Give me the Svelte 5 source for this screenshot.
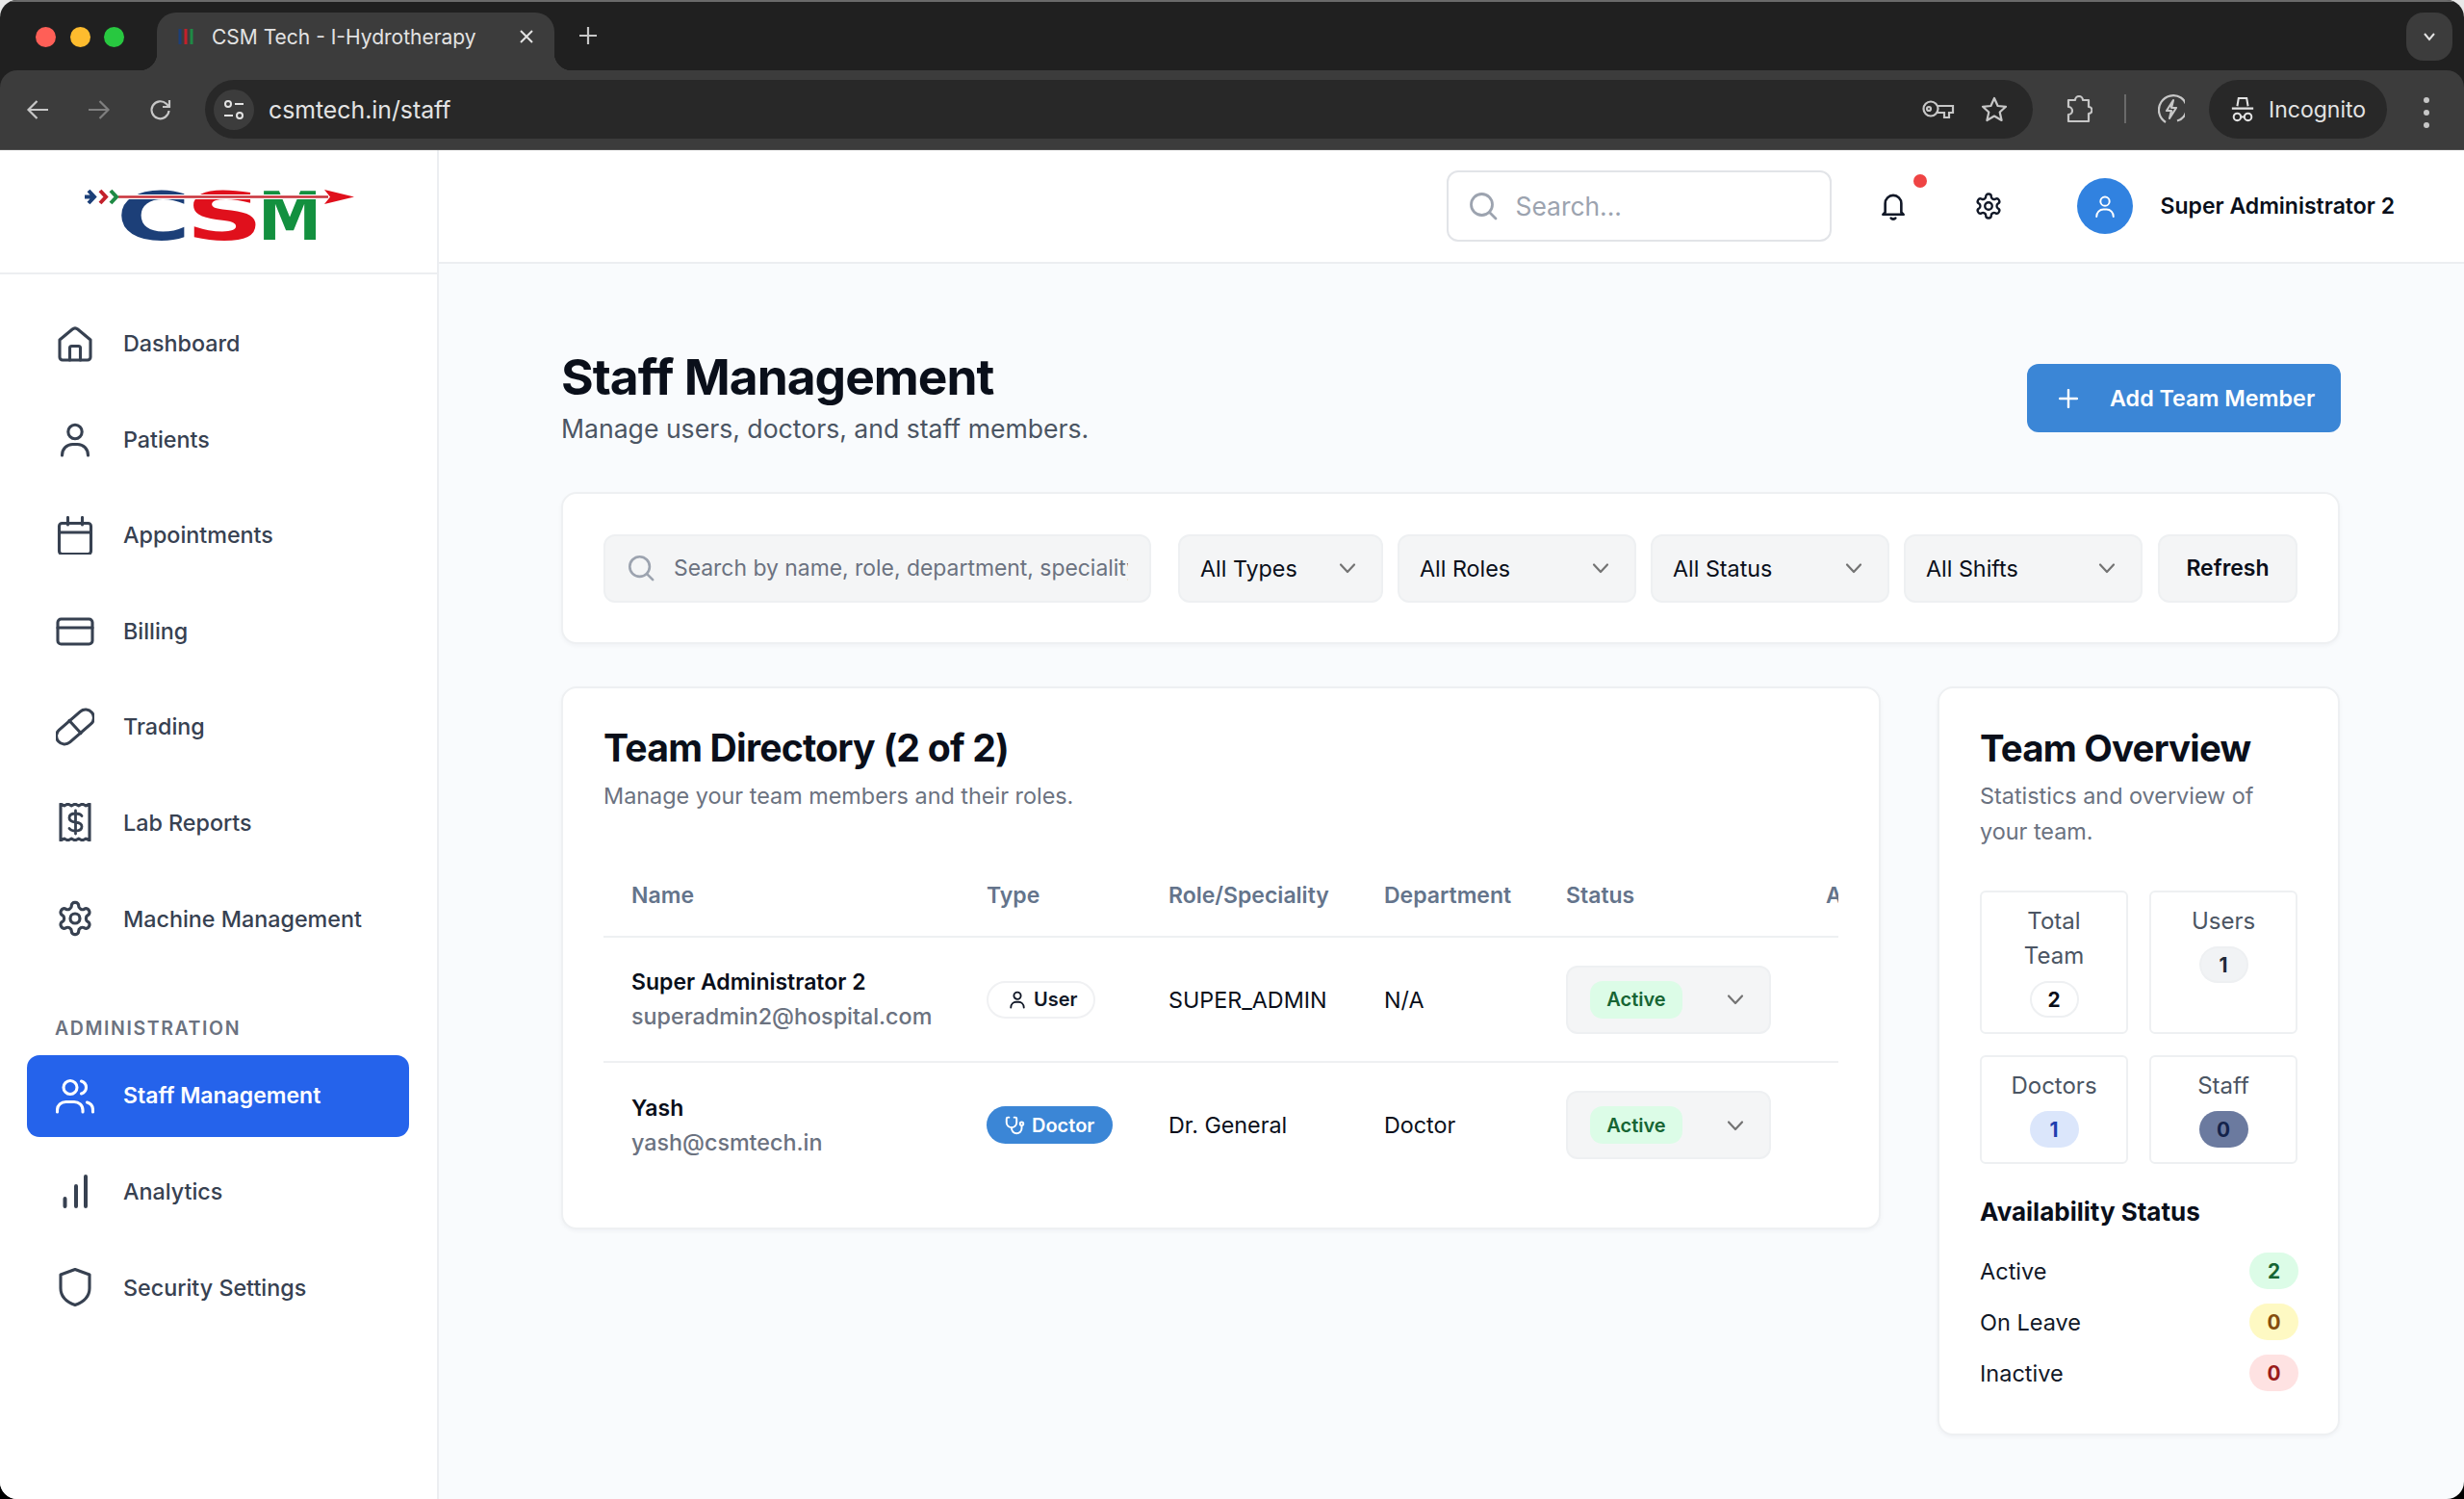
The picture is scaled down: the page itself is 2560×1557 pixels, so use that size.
<script lang="ts">
  const ICONS: Record<string, string> = {
    home: '<path d="M4 16 17.2 5a4.4 4.4 0 0 1 5.6 0L36 16v18a3 3 0 0 1-3 3H7a3 3 0 0 1-3-3Z"/><path d="M14.5 37V24.5a2 2 0 0 1 2-2h7a2 2 0 0 1 2 2V37"/>',
    user: '<circle cx="20" cy="12.5" r="7.2"/><path d="M6.5 37c0-7 5-11.5 11-11.5h5c6 0 11 4.500 11 11.500"/>',
    calendar: '<rect x="3.500" y="7.500" width="33" height="32" rx="3"/><path d="M3.500 17h33M12.500 1.500V9M27.500 1.500V9"/>',
    card: '<rect x="2" y="8" width="36" height="26" rx="3.500"/><path d="M2 17h36"/>',
    pill: '<rect x="-3" y="11.500" width="46" height="17" rx="8.500" transform="rotate(-41 20 20)"/><path d="m14 13.500 12 13"/>',
    receipt: '<path d="M5 1v38l3.750-2 3.750 2 3.750-2 3.750 2 3.750-2 3.750 2 3.750-2L35 39V1l-3.750 2-3.750-2-3.750 2L20 1l-3.750 2-3.750-2-3.750 2Z"/><path d="M27 13.500c-1-1.500-3-2.500-6.500-2.500-4 0-6.500 1.800-6.500 4.500s2.500 4 6.500 4.500 6.500 1.800 6.500 4.500-2.500 4.500-6.500 4.500c-3.500 0-5.500-1-6.500-2.500M20.500 8v24" stroke-width="2.800"/>',
    users: '<circle cx="15" cy="11.500" r="7"/><path d="M26.500 5c3 1 5 3.500 5 6.500s-2 5.500-5 6.500M1.500 37v-2c0-5 4-8.500 9-8.500h8.500c5 0 9 3.500 9 8.500v2M32.500 27c3.500 1 6 4 6 8v2"/>',
    bars: '<path d="M9.500 35v-8M21 35V14M31 35V4" stroke-width="4"/>',
    shield: '<path d="M20 1.500 35 7v14c0 9-6.500 14.500-15 17.500C11.500 35.500 5 30 5 21V7Z"/>',
  };
  const GEAR = '<g transform="scale(1.667)"><path stroke-width="1.900" d="M12.220 2h-.44a2 2 0 0 0-2 2v.18a2 2 0 0 1-1 1.730l-.43.25a2 2 0 0 1-2 0l-.15-.08a2 2 0 0 0-2.730.73l-.22.38a2 2 0 0 0 .73 2.730l.15.1a2 2 0 0 1 1 1.720v.51a2 2 0 0 1-1 1.740l-.15.09a2 2 0 0 0-.73 2.730l.22.38a2 2 0 0 0 2.730.73l.15-.08a2 2 0 0 1 2 0l.43.25a2 2 0 0 1 1 1.730V20a2 2 0 0 0 2 2h.44a2 2 0 0 0 2-2v-.18a2 2 0 0 1 1-1.730l.43-.25a2 2 0 0 1 2 0l.15.08a2 2 0 0 0 2.730-.73l.22-.39a2 2 0 0 0-.73-2.730l-.15-.08a2 2 0 0 1-1-1.740v-.5a2 2 0 0 1 1-1.740l.15-.09a2 2 0 0 0 .73-2.730l-.22-.38a2 2 0 0 0-2.730-.73l-.15.08a2 2 0 0 1-2 0l-.43-.25a2 2 0 0 1-1-1.730V4a2 2 0 0 0-2-2z"/><circle stroke-width="1.900" cx="12" cy="12" r="3"/></g>';

  const MAIN_NAV = [
    { label: 'Dashboard', icon: ICONS.home },
    { label: 'Patients', icon: ICONS.user },
    { label: 'Appointments', icon: ICONS.calendar },
    { label: 'Billing', icon: ICONS.card },
    { label: 'Trading', icon: ICONS.pill },
    { label: 'Lab Reports', icon: ICONS.receipt },
    { label: 'Machine Management', icon: GEAR },
  ];
  const ADMIN_NAV = [
    { label: 'Staff Management', icon: ICONS.users, active: true },
    { label: 'Analytics', icon: ICONS.bars },
    { label: 'Security Settings', icon: ICONS.shield },
  ];
  const FILTERS = [
    { label: 'All Types', width: 213 },
    { label: 'All Roles', width: 248 },
    { label: 'All Status', width: 248 },
    { label: 'All Shifts', width: 248 },
  ];
  const MEMBERS = [
    { name: 'Super Administrator 2', email: 'superadmin2@hospital.com', type: 'User', role: 'SUPER_ADMIN', dept: 'N/A' },
    { name: 'Yash', email: 'yash@csmtech.in', type: 'Doctor', role: 'Dr. General', dept: 'Doctor' },
  ];
  const STATS = [
    { label: 'Total Team', value: 2, tone: 'plain' },
    { label: 'Users', value: 1, tone: 'soft' },
    { label: 'Doctors', value: 1, tone: 'blue' },
    { label: 'Staff', value: 0, tone: 'slate' },
  ];
  const AVAILABILITY = [
    { label: 'Active', value: 2, tone: 'green' },
    { label: 'On Leave', value: 0, tone: 'yellow' },
    { label: 'Inactive', value: 0, tone: 'red' },
  ];
</script>

{#snippet chevron()}
  <svg class="chevron" viewBox="0 0 20 20" width="20" height="20" fill="none" stroke="currentColor" stroke-width="2.200" stroke-linecap="round" stroke-linejoin="round"><path d="m3 6.500 7 7.500 7-7.500" /></svg>
{/snippet}

{#snippet searchIcon()}
  <svg viewBox="0 0 32 32" width="32" height="32" fill="none" stroke="currentColor" stroke-width="2.800" stroke-linecap="round"><circle cx="14.500" cy="14.500" r="11" /><path d="m22.500 22.500 6.500 6.500" /></svg>
{/snippet}

<div class="window">
  <div class="browser">
    <div class="tabstrip">
      <div class="lights">
        <span class="light red"></span>
        <span class="light yellow"></span>
        <span class="light green"></span>
      </div>
      <div class="tab">
        <svg class="favicon" viewBox="0 0 20 20" width="20" height="20" fill="none" stroke-width="3"><path stroke="#1c3f78" d="M4 2v16" /><path stroke="#c3202b" d="M10 2v16" /><path stroke="#1f8a45" d="M16 2v16" /></svg>
        <span class="tab-title">CSM Tech - I-Hydrotherapy</span>
        <svg class="tab-close" viewBox="0 0 16 16" width="16" height="16" fill="none" stroke="#e3e3e3" stroke-width="2"><path d="m2 2 12 12M14 2 2 14" /></svg>
      </div>
      <svg class="new-tab" viewBox="0 0 20 20" width="20" height="20" fill="none" stroke="#c7c7c7" stroke-width="2.200"><path d="M10 1v18M1 10h18" /></svg>
      <span class="tab-search">
        <svg viewBox="0 0 14 14" width="14" height="14" fill="none" stroke="#e3e3e3" stroke-width="2"><path d="m2 4 5 6 5-6" /></svg>
      </span>
    </div>
    <div class="toolbar">
      <span class="tool">
        <svg viewBox="0 0 24 24" width="24" height="24" fill="none" stroke="#c7c7c7" stroke-width="2.200"><path d="M23 12H3M11.500 3 2.500 12l9 9" /></svg>
      </span>
      <span class="tool">
        <svg viewBox="0 0 24 24" width="24" height="24" fill="none" stroke="#7f7f7f" stroke-width="2.200"><path d="M1 12h20M12.500 3l9 9-9 9" /></svg>
      </span>
      <span class="tool">
        <svg viewBox="0 0 24 24" width="24" height="24" fill="none" stroke="#c7c7c7" stroke-width="2.200"><path d="M20.500 13a9 9 0 1 1-2.700-7.200L21 9M21 2v7h-7" /></svg>
      </span>
      <div class="omnibox">
        <span class="site-info">
          <svg viewBox="0 0 24 24" width="24" height="24" fill="none" stroke="#e3e3e3" stroke-width="2"><circle cx="6" cy="6" r="3" /><path d="M13 6h9M2 18h9" /><circle cx="18" cy="18" r="3" /></svg>
        </span>
        <span class="url">csmtech.in/staff</span>
        <span class="omni-actions">
          <svg viewBox="0 0 34 24" width="34" height="24" fill="none" stroke="#c7c7c7" stroke-width="2.200"><circle cx="9" cy="11" r="7.500" /><circle cx="7" cy="11" r="2" /><path d="M16 8h16v7h-4v5h-5v-5h-7" /></svg>
          <svg viewBox="0 0 28 28" width="28" height="28" fill="none" stroke="#c7c7c7" stroke-width="2.200" stroke-linejoin="round"><path d="m14 2 3.600 8 8.400.8-6.300 5.700 1.900 8.500-7.600-4.500L6.400 25l1.900-8.500L2 10.800l8.400-.8Z" /></svg>
        </span>
      </div>
      <svg class="ext" viewBox="0 0 28 32" width="28" height="32" fill="none" stroke="#c7c7c7" stroke-width="2.200" stroke-linejoin="round"><path d="M3 7h7a4 4 0 0 1 8 0h6v7a3.500 3.500 0 0 1 0 7v8H3v-7a4 4 0 0 0 0-8Z" /></svg>
      <span class="sep"></span>
      <svg class="perf" viewBox="0 0 28 34" width="28" height="34" fill="none" stroke="#c7c7c7" stroke-width="2.200" stroke-linejoin="round"><path d="M8 31A13.500 13.500 0 0 1 24 5.500a13.500 13.500 0 0 1-4 24" /><path d="M16 8 9 19h5l-2 8 7-11h-5Z" /></svg>
      <div class="incognito">
        <svg viewBox="0 0 28 32" width="26" height="30" fill="none" stroke="#e3e3e3" stroke-width="2.200"><path d="M8 12 9.500 3h9L20 12M2 14.500h24" /><circle cx="8" cy="24" r="4" /><circle cx="20" cy="24" r="4" /><path d="M12 24h4" /></svg>
        <span>Incognito</span>
      </div>
      <span class="dots"><i></i><i></i><i></i></span>
    </div>
  </div>

  <div class="app">
    <aside class="sidebar">
      <div class="logo">
        <svg viewBox="0 -24 282 96" width="282" height="96" aria-label="CSM logo">
          <text class="logo-letter" transform="translate(34 53) scale(1.500 1)" fill="#1c3f78">C</text>
          <text class="logo-letter" transform="translate(106 53) scale(1.600 1)" fill="#e0101c">S</text>
          <text class="logo-letter" transform="translate(181 53) scale(0.950 1)" fill="#13903f">M</text>
          <path d="M36 8.500h216" stroke="#fff" stroke-width="5" />
          <path d="M36 8.500h218" stroke="#c8323a" stroke-width="2.400" />
          <path d="m250 1 31 7.500-31 7.500 6-7.500Z" fill="#e0101c" />
          <g fill="none" stroke-width="4">
            <path d="m5 2 6 6.500-6 6.500M11 8.500H1" stroke="#1c3f78" />
            <path d="m17 2 6 6.500-6 6.500" stroke="#c3202b" />
            <path d="m28 2 6 6.500-6 6.500" stroke="#1f8a45" />
          </g>
        </svg>
      </div>
      <nav class="nav">
        {#each MAIN_NAV as item}
          <a class="nav-item" href="#top">
            <svg viewBox="0 0 40 40" width="40" height="40" fill="none" stroke="currentColor" stroke-width="3.100" stroke-linecap="round" stroke-linejoin="round">{@html item.icon}</svg>
            <span>{item.label}</span>
          </a>
        {/each}
        <div class="nav-heading">ADMINISTRATION</div>
        {#each ADMIN_NAV as item}
          <a class="nav-item" class:active={item.active} href="#top">
            <svg viewBox="0 0 40 40" width="40" height="40" fill="none" stroke="currentColor" stroke-width="3.100" stroke-linecap="round" stroke-linejoin="round">{@html item.icon}</svg>
            <span>{item.label}</span>
          </a>
        {/each}
      </nav>
    </aside>

    <div class="page">
      <header class="topbar">
        <div class="top-search">
          {@render searchIcon()}
          <span>Search...</span>
        </div>
        <span class="bell">
          <svg viewBox="0 0 28 32" width="26" height="30" fill="none" stroke="#111827" stroke-width="2.800" stroke-linecap="round" stroke-linejoin="round"><path d="M5 23V13a9 9 0 0 1 18 0v10l2.500 2.500h-23ZM11.500 29.500c1 1.500 4 1.500 5 0" /></svg>
          <i class="bell-dot"></i>
        </span>
        <svg class="top-gear" viewBox="0 0 40 40" width="30" height="30" fill="none" stroke="#111827" stroke-width="3.200" stroke-linecap="round" stroke-linejoin="round">{@html GEAR}</svg>
        <span class="avatar">
          <svg viewBox="0 0 40 40" width="26" height="26" fill="none" stroke="#fff" stroke-width="3" stroke-linecap="round">{@html ICONS.user}</svg>
        </span>
        <span class="user-name">Super Administrator 2</span>
      </header>

      <main class="main">
        <div class="heading">
          <div>
            <h1>Staff Management</h1>
            <p>Manage users, doctors, and staff members.</p>
          </div>
          <button class="add-btn">
            <svg viewBox="0 0 20 20" width="20" height="20" fill="none" stroke="#fff" stroke-width="2.400" stroke-linecap="round"><path d="M10 1v18M1 10h18" /></svg>
            Add Team Member
          </button>
        </div>

        <section class="card filters">
          <div class="filter-search">
            {@render searchIcon()}
            <span class="clip">Search by name, role, department, speciality...</span>
          </div>
          {#each FILTERS as f}
            <div class="select" style="width: {f.width}px">
              <span>{f.label}</span>
              {@render chevron()}
            </div>
          {/each}
          <button class="refresh">Refresh</button>
        </section>

        <div class="columns">
          <section class="card directory">
            <h2>Team Directory (2 of 2)</h2>
            <p class="muted">Manage your team members and their roles.</p>
            <div class="table-wrap">
              <table>
                <colgroup>
                  <col style="width: 370px" />
                  <col style="width: 189px" />
                  <col style="width: 224px" />
                  <col style="width: 189px" />
                  <col style="width: 270px" />
                  <col style="width: 200px" />
                </colgroup>
                <thead>
                  <tr>
                    <th>Name</th>
                    <th>Type</th>
                    <th>Role/Speciality</th>
                    <th>Department</th>
                    <th>Status</th>
                    <th>Actions</th>
                  </tr>
                </thead>
                <tbody>
                  {#each MEMBERS as m}
                    <tr>
                      <td>
                        <div class="member-name">{m.name}</div>
                        <div class="member-email">{m.email}</div>
                      </td>
                      <td>
                        {#if m.type === 'User'}
                          <span class="type-badge user">
                            <svg viewBox="0 0 40 40" width="20" height="20" fill="none" stroke="currentColor" stroke-width="3.800" stroke-linecap="round">{@html ICONS.user}</svg>
                            User
                          </span>
                        {:else}
                          <span class="type-badge doctor">
                            <svg viewBox="0 0 24 24" width="21" height="21" fill="none" stroke="currentColor" stroke-width="2.200" stroke-linecap="round" stroke-linejoin="round"><path d="M5 3H3.500A1.500 1.500 0 0 0 2 4.500V9a6 6 0 0 0 12 0V4.500A1.500 1.500 0 0 0 12.500 3H11" /><path d="M8 15v1a6 6 0 0 0 12 0v-3" /><circle cx="20" cy="10.500" r="2" /></svg>
                            Doctor
                          </span>
                        {/if}
                      </td>
                      <td>{m.role}</td>
                      <td>{m.dept}</td>
                      <td>
                        <div class="status-select">
                          <span class="status-pill">Active</span>
                          {@render chevron()}
                        </div>
                      </td>
                      <td></td>
                    </tr>
                  {/each}
                </tbody>
              </table>
            </div>
          </section>

          <section class="card overview">
            <h2>Team Overview</h2>
            <p class="muted overview-sub">Statistics and overview of your team.</p>
            <div class="stats">
              {#each STATS as s}
                <div class="stat">
                  <div class="stat-label">{s.label}</div>
                  <span class="count {s.tone}">{s.value}</span>
                </div>
              {/each}
            </div>
            <h3>Availability Status</h3>
            <div class="avail">
              {#each AVAILABILITY as a}
                <div class="avail-row">
                  <span>{a.label}</span>
                  <span class="count {a.tone}">{a.value}</span>
                </div>
              {/each}
            </div>
          </section>
        </div>
      </main>
    </div>
  </div>
</div>

<style>
  :global(body) {
    margin: 0;
    background: linear-gradient(#e8e8e8 50%, #000 50%);
    font-family: Inter, "Liberation Sans", sans-serif;
  }
  * { box-sizing: border-box; }
  h1, h2, h3, p { margin: 0; }
  button { font-family: inherit; cursor: pointer; }

  .window {
    width: 2560px;
    height: 1557px;
    display: flex;
    flex-direction: column;
    border-radius: 18px;
    overflow: hidden;
    background: #f9fbfd;
    color: #0a0f1a;
  }

  /* browser frame */
  .browser { height: 156px; flex: none; background: #202020; border-top: 2px solid #6a6a6a; }
  .tabstrip { height: 71px; display: flex; align-items: flex-start; position: relative; }
  .lights { display: flex; gap: 14.500px; padding: 26px 0 0 37px; width: 163px; }
  .light { width: 21px; height: 21px; border-radius: 50%; }
  .light.red { background: #ff5f57; }
  .light.yellow { background: #febc2e; }
  .light.green { background: #28c840; }
  .tab {
    margin-top: 11px;
    width: 413px;
    height: 60px;
    background: #3c3c3c;
    border-radius: 20px 20px 0 0;
    display: flex;
    align-items: center;
    padding: 0 0 10px 20px;
    position: relative;
  }
  .tab::before, .tab::after {
    content: '';
    position: absolute;
    bottom: 0;
    width: 18px;
    height: 18px;
  }
  .tab::before { left: -18px; background: radial-gradient(circle at 0 0, transparent 18px, #3c3c3c 18.500px); }
  .tab::after { right: -18px; background: radial-gradient(circle at 100% 0, transparent 18px, #3c3c3c 18.500px); }
  .favicon { flex: none; }
  .tab-title { margin-left: 17px; font-size: 21px; color: #e3e3e3; white-space: nowrap; width: 319px; }
  .tab-close { flex: none; }
  .new-tab { margin: 25px 0 0 25px; }
  .tab-search {
    margin: 11px 12px 0 auto;
    width: 48px;
    height: 50px;
    border-radius: 18px;
    background: #3c3c3c;
    display: flex;
    align-items: center;
    justify-content: center;
  }
  .toolbar {
    height: 83px;
    background: #3c3c3c;
    border-radius: 18px 18px 0 0;
    display: flex;
    align-items: flex-start;
    padding: 10px 0 0 7px;
    position: relative;
    border-bottom: 1px solid #555;
  }
  .tool { width: 64px; height: 61px; display: flex; align-items: center; justify-content: center; flex: none; }
  .omnibox {
    margin-left: 14px;
    width: 1899px;
    height: 61px;
    background: #282828;
    border-radius: 31px;
    display: flex;
    align-items: center;
    padding: 0 26px 0 9px;
    flex: none;
  }
  .site-info {
    width: 42px;
    height: 42px;
    border-radius: 50%;
    background: #3c3c3c;
    display: flex;
    align-items: center;
    justify-content: center;
  }
  .url { margin-left: 15px; font-size: 24.800px; color: #e3e3e3; }
  .omni-actions { margin-left: auto; display: flex; align-items: center; gap: 27px; }
  .ext { margin: 14px 0 0 34px; flex: none; }
  .sep { width: 2px; height: 30px; background: #6a6a6a; margin: 15px 0 0 33px; flex: none; }
  .perf { margin: 13px 0 0 33px; flex: none; }
  .incognito {
    margin-left: 25px;
    width: 185px;
    height: 61px;
    background: #282828;
    border-radius: 31px;
    display: flex;
    align-items: center;
    gap: 14px;
    padding-left: 22px;
    color: #e3e3e3;
    font-size: 23px;
    flex: none;
  }
  .dots { margin: 18px 0 0 38px; display: flex; flex-direction: column; gap: 7px; }
  .dots i { width: 6px; height: 6px; border-radius: 50%; background: #c7c7c7; }

  .app { flex: 1; display: flex; min-height: 0; }

  /* sidebar */
  .sidebar { width: 456px; flex: none; background: #fff; border-right: 2px solid #eceef1; }
  .logo { height: 129px; border-bottom: 2px solid #eceef1; padding: 16px 0 0 87px; }
  .logo svg { display: block; }
  .logo-letter { font-family: "DejaVu Sans", sans-serif; font-weight: 700; font-size: 70px; }
  .nav { padding: 29px 29px 0 28px; display: flex; flex-direction: column; gap: 14.600px; }
  .nav-item {
    height: 85px;
    display: flex;
    align-items: center;
    gap: 30px;
    padding-left: 30px;
    border-radius: 13px;
    color: #374151;
    font-size: 23.300px;
    font-weight: 500;
    text-decoration: none;
    flex: none;
  }
  .nav-item svg { flex: none; }
  .nav-item.active { background: #2563eb; color: #fff; font-weight: 600; font-size: 23px; }
  .nav-heading {
    margin: 43px 0 -1px 29px;
    font-size: 19.500px;
    font-weight: 600;
    letter-spacing: 1.600px;
    color: #6b7280;
    line-height: 28px;
  }

  /* top bar */
  .page { flex: 1; min-width: 0; display: flex; flex-direction: column; }
  .topbar {
    height: 118px;
    flex: none;
    background: #fff;
    border-bottom: 2px solid #eceef1;
    display: flex;
    align-items: center;
    justify-content: flex-end;
    padding-right: 72px;
  }
  .top-search {
    width: 400px;
    height: 74px;
    border: 2px solid #e2e4e8;
    border-radius: 12px;
    display: flex;
    align-items: center;
    gap: 17px;
    padding-left: 20px;
    color: #9ca3af;
    font-size: 26.400px;
  }
  .bell { margin-left: 51px; position: relative; display: flex; }
  .bell-dot {
    position: absolute;
    left: 34px;
    top: -18px;
    width: 14px;
    height: 14px;
    border-radius: 50%;
    background: #ef4444;
  }
  .top-gear { margin-left: 71px; flex: none; }
  .avatar {
    margin-left: 77px;
    width: 58px;
    height: 58px;
    border-radius: 50%;
    background: #3182e0;
    display: flex;
    align-items: center;
    justify-content: center;
  }
  .user-name { margin-left: 28px; font-size: 23px; font-weight: 600; color: #0a0f1a; white-space: nowrap; }

  /* main */
  .main { flex: 1; min-height: 0; padding: 89px 129px 0 127px; }
  .heading { display: flex; justify-content: space-between; align-items: flex-start; margin-bottom: 46px; }
  h1 { font-size: 51.500px; font-weight: 700; line-height: 56px; letter-spacing: -1px; color: #0a0f1a; }
  .heading p { margin-top: 6px; font-size: 26.600px; line-height: 40px; color: #4b5563; }
  .add-btn {
    margin-top: 15px;
    margin-right: -1px;
    width: 326px;
    height: 71px;
    border: none;
    border-radius: 12px;
    background: #3b86d6;
    color: #fff;
    font-size: 23.300px;
    font-weight: 600;
    display: flex;
    align-items: center;
    gap: 33px;
    padding-left: 33px;
  }

  .card {
    background: #fff;
    border: 2px solid #eef0f2;
    border-radius: 16px;
    box-shadow: 0 2px 4px rgba(15, 23, 42, 0.04);
  }
  .filters {
    height: 158px;
    display: flex;
    align-items: center;
    gap: 15px;
    padding: 0 43px 0 42px;
  }
  .filter-search, .select, .refresh, .status-select {
    height: 71px;
    background: #f4f5f6;
    border: 2px solid #eef0f2;
    border-radius: 12px;
    font-size: 23.300px;
  }
  .filter-search {
    width: 569px;
    flex: none;
    margin-right: 13px;
    display: flex;
    align-items: center;
    gap: 19px;
    padding: 0 22px 0 22px;
    color: #6b7280;
    font-size: 22.900px;
  }
  .filter-search svg { color: #9ca3af; flex: none; width: 30px; height: 30px; }
  .clip { overflow: hidden; white-space: nowrap; }
  .select {
    flex: none;
    display: flex;
    align-items: center;
    justify-content: space-between;
    padding: 0 25px 0 21px;
    color: #0a0f1a;
  }
  .chevron { color: #737373; flex: none; }
  .refresh { width: 145px; flex: none; margin-left: 1px; font-weight: 600; color: #0a0f1a; font-size: 23px; }

  .columns { display: grid; grid-template-columns: 1371px 418px; gap: 59px; align-items: start; margin-top: 44px; }
  h2 { font-size: 39.200px; font-weight: 700; line-height: 52px; letter-spacing: -0.800px; color: #0a0f1a; }
  .muted { font-size: 23.400px; line-height: 37px; color: #6b7280; }
  .directory { padding: 36px 43px 42px 42px; }
  .directory .muted { margin-top: 5px; }
  .table-wrap { margin-top: 42px; width: 1283px; overflow: hidden; }
  table { width: 1442px; table-layout: fixed; border-collapse: collapse; font-size: 23.300px; }
  th {
    height: 86px;
    padding: 0 0 0 28px;
    text-align: left;
    font-weight: 600;
    font-size: 23px;
    color: #64748b;
    white-space: nowrap;
    border-bottom: 2px solid #eef0f2;
  }
  th:first-child, td:first-child { padding-left: 29px; }
  td { height: 130px; padding: 0 0 0 28px; border-bottom: 2px solid #eef0f2; white-space: nowrap; color: #0a0f1a; }
  tbody tr:last-child td { border-bottom: none; }
  .member-name { font-weight: 600; line-height: 36px; font-size: 23px; }
  .member-email { color: #6b7280; line-height: 36px; font-weight: 500; font-size: 23.300px; }
  .type-badge {
    display: inline-flex;
    align-items: center;
    gap: 7px;
    height: 39px;
    padding: 0 17px 0 20px;
    border-radius: 20px;
    font-size: 20px;
    font-weight: 600;
    vertical-align: middle;
  }
  .type-badge.user { background: #fff; border: 2px solid #f0f1f3; color: #111827; }
  .type-badge.doctor { background: #3b86d6; color: #fff; padding: 0 19px; }
  .status-select {
    width: 213px;
    display: flex;
    align-items: center;
    justify-content: space-between;
    padding: 0 25px 0 23px;
  }
  .status-pill {
    width: 96px;
    height: 39px;
    border-radius: 13px;
    background: #dcfce7;
    color: #166534;
    font-size: 20px;
    font-weight: 600;
    display: flex;
    align-items: center;
    justify-content: center;
  }

  .overview { padding: 36px 41px 44px 42px; }
  .overview h2 { font-size: 38.400px; }
  .overview-sub { margin-top: 5px; }
  .stats { display: grid; grid-template-columns: 154px 154px; gap: 22px; margin-top: 43px; }
  .stat {
    border: 2px solid #eef0f2;
    border-radius: 6px;
    padding: 12px 14px 15px;
    text-align: center;
  }
  .stat-label { font-size: 24px; line-height: 36px; color: #4b5563; }
  .count {
    display: inline-flex;
    align-items: center;
    justify-content: center;
    width: 51px;
    height: 38px;
    border-radius: 19px;
    font-size: 20.800px;
    font-weight: 700;
  }
  .stat .count { margin-top: 8px; }
  .count.plain { background: #fff; border: 2px solid #eef0f2; color: #0a0f1a; }
  .count.soft { background: #f1f3f5; border: 2px solid #eef0f2; color: #1f2937; }
  .count.blue { background: #dbe6fb; color: #1e40af; }
  .count.slate { background: #6b7a9f; color: #14234a; }
  .count.green { background: #dcfce7; color: #166534; }
  .count.yellow { background: #fef9c3; color: #854d0e; }
  .count.red { background: #fee2e2; color: #991b1b; }
  h3 { margin-top: 32px; font-size: 26px; font-weight: 700; line-height: 36px; color: #0a0f1a; }
  .avail { margin-top: 24px; display: flex; flex-direction: column; gap: 15px; }
  .avail-row { display: flex; align-items: center; justify-content: space-between; font-size: 23.500px; color: #111827; }
</style>
